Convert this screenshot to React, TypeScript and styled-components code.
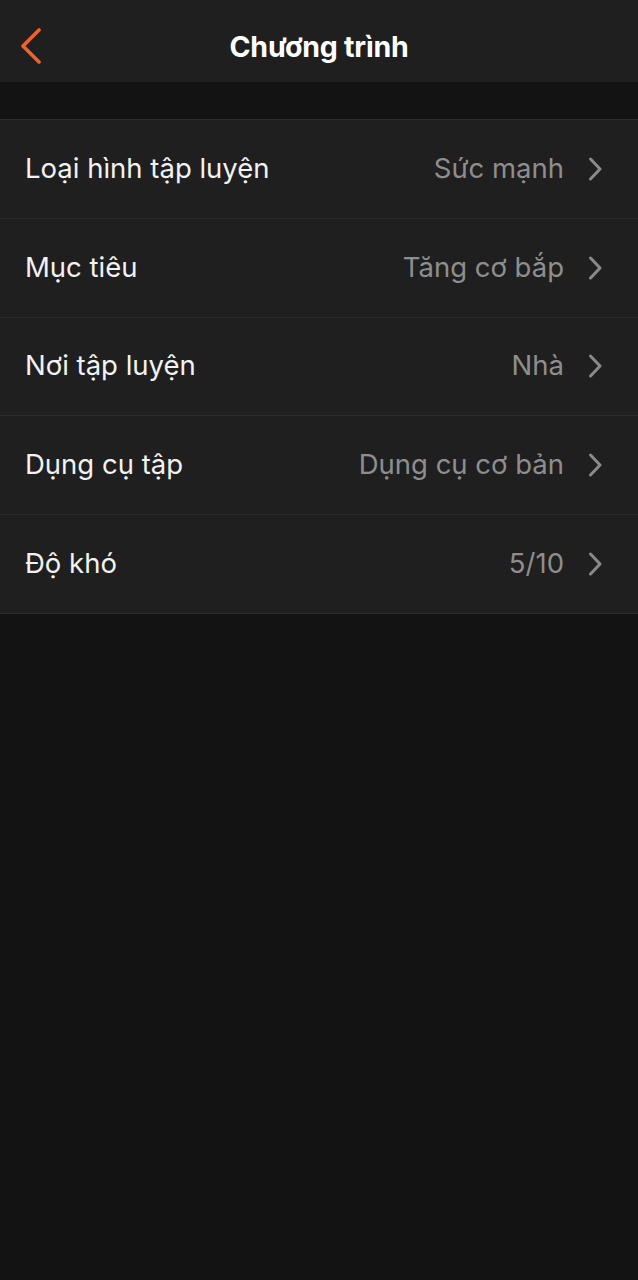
import React from "react";
import styled, { createGlobalStyle } from "styled-components";

const Global = createGlobalStyle`
	html, body {
		margin: 0;
		padding: 0;
		background: #131313;
	}
	body {
		font-family: Inter, "Noto Sans", sans-serif;
		-webkit-font-smoothing: antialiased;
	}
`;

const Page = styled.div`
	width: 638px;
	min-height: 1280px;
	background: #131313;
	display: flex;
	flex-direction: column;
`;

const Header = styled.header`
	height: 82px;
	box-sizing: border-box;
	padding-top: 10px;
	background: #1f1f1f;
	display: grid;
	grid-template-columns: 80px 1fr 80px;
	align-items: center;
`;

const BackBtn = styled.button`
	background: none;
	border: none;
	padding: 0 0 0 19px;
	height: 72px;
	display: flex;
	align-items: center;
	cursor: pointer;
`;

const Title = styled.h1`
	margin: 0;
	text-align: center;
	color: #ffffff;
	font-size: 28.5px;
	font-weight: 700;
	letter-spacing: -0.2px;
`;

const List = styled.section`
	margin-top: 37px;
	border-top: 1px solid #2c2c2c;
	background: #1f1f1f;
`;

const Row = styled.div`
	height: 97.8px;
	display: flex;
	align-items: center;
	justify-content: space-between;
	padding: 0 35px 0 25px;
	border-bottom: 1px solid #2c2c2c;
`;

const Label = styled.span`
	color: #f2f2f2;
	font-size: 27.5px;
	font-weight: 400;
	margin-top: -2px;
`;

const Right = styled.div`
	display: flex;
	align-items: center;
	gap: 24px;
`;

const Value = styled.span`
	color: #8e8e8e;
	font-size: 27.5px;
	font-weight: 400;
	margin-top: -2px;
`;

const rows = [
	{ label: "Loại hình tập luyện", value: "Sức mạnh" },
	{ label: "Mục tiêu", value: "Tăng cơ bắp" },
	{ label: "Nơi tập luyện", value: "Nhà" },
	{ label: "Dụng cụ tập", value: "Dụng cụ cơ bản" },
	{ label: "Độ khó", value: "5/10" },
];

const Chevron = () => (
	<svg width="15" height="24" viewBox="0 0 15 24">
		<path d="M2.5 2 L12 12 L2.5 22" fill="none" stroke="#8a8a8a" strokeWidth="3" strokeLinecap="round" strokeLinejoin="round" />
	</svg>
);

const App = () => {
	return (
		<Page>
			<Global />
			<Header>
				<BackBtn aria-label="back">
					<svg width="23" height="36" viewBox="0 0 23 36">
						<path d="M20 2 L4 18 L20 34" fill="none" stroke="#f0622b" strokeWidth="3.6" strokeLinecap="round" strokeLinejoin="round" />
					</svg>
				</BackBtn>
				<Title>Chương trình</Title>
				<div />
			</Header>
			<List>
				{rows.map((r) => (
					<Row key={r.label}>
						<Label>{r.label}</Label>
						<Right>
							<Value>{r.value}</Value>
							<Chevron />
						</Right>
					</Row>
				))}
			</List>
		</Page>
	);
};

export default App;
